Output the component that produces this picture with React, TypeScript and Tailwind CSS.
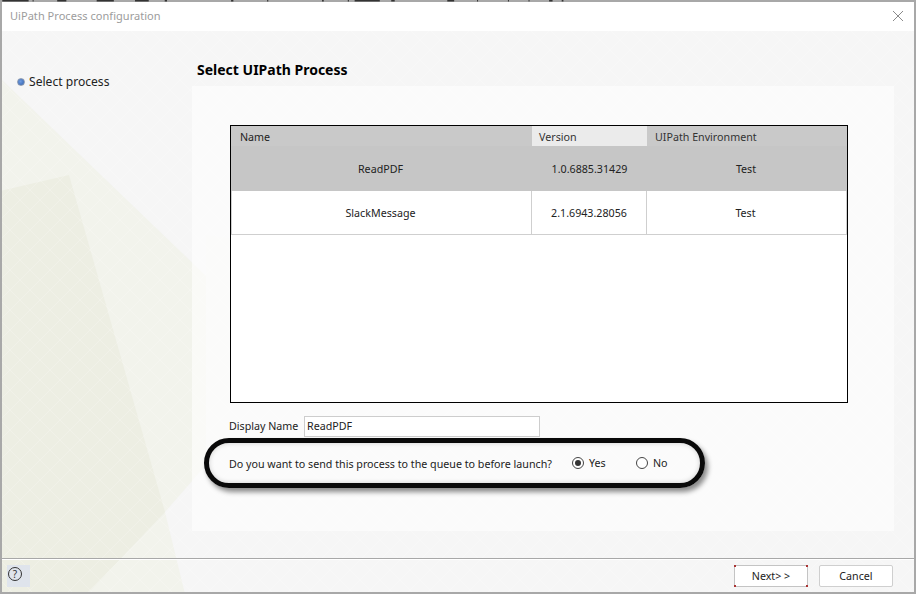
export default function App() {
  const font = "[font-family:'Noto_Sans',sans-serif]";
  const fragments = [[4, 46], [57, 1], [100, 16], [169, 30], [236, 24], [288, 4], [404, 4], [467, 2], [563, 3], [608, 2], [620, 44], [684, 6], [782, 12], [834, 1], [888, 1], [924, 1], [960, 6], [982, 3]];
  return (
    <div className={`relative isolate w-[916px] h-[594px] overflow-hidden bg-[#f6f6f6] flex flex-col ${font} text-[#1a1a1a]`}>
      <svg className="absolute inset-0 -z-10" width="916" height="594" aria-hidden="true">
        <defs>
          <pattern id="hatch" width="20" height="20" patternUnits="userSpaceOnUse">
            <path d="M0 0L20 20M20 0L0 20" stroke="#ffffff" strokeOpacity="0.25" strokeWidth="0.8" />
          </pattern>
        </defs>
        <polygon points="0,78 206,276 206,465 165,512 185,594 0,594" fill="#f2f3ec" />
        <polygon points="0,191 69,175 165,512 87,594 0,594" fill="#edeee3" />
        <polygon points="206,235 230,238 230,440 206,465" fill="#f6f6f2" />
        <rect width="916" height="594" fill="url(#hatch)" />
      </svg>

      <div className="h-[2px] shrink-0 bg-[#a8a8a8]">
        <svg width="916" height="2" className="block" aria-hidden="true">
          {fragments.map(([x, w]) => (
            <rect key={x} x={x * 0.572} y="0" width={Math.max(w * 0.572, 1)} height="1.5" fill="#333" />
          ))}
        </svg>
      </div>

      <div className="flex-1 flex flex-col border-x-2 border-[#a8a8a8] min-h-0">
        <div className="h-[29px] shrink-0 bg-white flex items-center justify-between pl-[8px] pr-[10px]">
          <span className="text-[11px] text-[#9c9c9c] tracking-[0.04px]">UiPath Process configuration</span>
          <svg width="12" height="12" viewBox="0 0 12 12" className="-mt-[2px]" aria-hidden="true">
            <path d="M1 1L11 11M11 1L1 11" stroke="#8a8a8a" strokeWidth="1" fill="none" />
          </svg>
        </div>

        <div className="h-[527px] shrink-0 flex">
          <div className="w-[190px] shrink-0 pl-[15px] pt-[42px]">
            <div className="flex items-center gap-[4px] h-[18px] text-[12.1px] text-[#222]">
              <span className="-mt-[1px] w-[8px] h-[8px] rounded-full border border-[#8f9cb3] bg-[radial-gradient(circle_at_40%_40%,#6f9be0,#2e5fae)]" />
              <span>Select process</span>
            </div>
          </div>
          <div className="w-[702px] shrink-0">
            <div className="h-[55px] pl-[5px] pt-[27px] text-[14px] leading-[24px] font-bold text-black">Select UIPath Process</div>
            <div className="h-[445px] bg-white/60 pt-[39px] flex flex-col">
              <div className="ml-[38px] w-[618px] h-[278px] border border-black shrink-0 bg-white text-[10.7px]">
                <div className="grid grid-cols-[301px_115px_200px] h-[20px] bg-[#c9c9c9]">
                  <div className="pl-[9px] pt-[2px] flex items-center text-[#222]">Name</div>
                  <div className="pl-[7px] pt-[2px] flex items-center bg-[#ebebeb] text-[#333]">Version</div>
                  <div className="pl-[8px] pt-[2px] flex items-center text-[#333]">UIPath Environment</div>
                </div>
                <div className="grid grid-cols-[301px_115px_200px] h-[45px] bg-[#c6c6c6] text-[#222]">
                  <div className="pt-[2px] pr-[2px] flex items-center justify-center">ReadPDF</div>
                  <div className="pt-[2px] flex items-center justify-center">1.0.6885.31429</div>
                  <div className="pt-[2px] pr-[2px] flex items-center justify-center">Test</div>
                </div>
                <div className="grid grid-cols-[301px_115px_200px] h-[44px] text-[#222] border-b border-[#cfcfcf]">
                  <div className="pt-[2px] pr-[2px] flex items-center justify-center border-x border-[#cfcfcf]">SlackMessage</div>
                  <div className="pt-[2px] flex items-center justify-center border-r border-[#cfcfcf]">2.1.6943.28056</div>
                  <div className="pt-[2px] pr-[2px] flex items-center justify-center border-r border-[#cfcfcf]">Test</div>
                </div>
              </div>

              <div className="mt-[13px] ml-[37px] h-[21px] flex items-center shrink-0 text-[10.7px] text-[#222]">
                <span className="w-[75px]">Display Name</span>
                <div className="w-[236px] h-[21px] bg-white border border-[#cdcdcd] pl-[2px] flex items-center">ReadPDF</div>
              </div>

              <div className="mt-[1px] ml-[12px] w-[501px] h-[50px] shrink-0 rounded-full border-[5px] border-[#0a0a0a] shadow-[3px_4px_5px_rgba(0,0,0,0.45),inset_0_0_5px_rgba(0,0,0,0.18)] pl-[20px] flex items-center text-[10.7px] text-[#222]">
                <span className="w-[343px] pt-[3px] whitespace-nowrap">Do you want to send this process to the queue to before launch?</span>
                <div className="flex items-center gap-[5px] w-[64px]">
                  <span className="w-[12px] h-[12px] rounded-full border border-[#444] flex items-center justify-center bg-white">
                    <span className="w-[6px] h-[6px] rounded-full bg-[#333]" />
                  </span>
                  <span>Yes</span>
                </div>
                <div className="flex items-center gap-[5px]">
                  <span className="w-[12px] h-[12px] rounded-full border border-[#444] bg-white" />
                  <span>No</span>
                </div>
              </div>
            </div>
          </div>
        </div>

        <div className="flex-1 min-h-0 border-t border-[#a8a8a8] shadow-[inset_0_1px_0_#ffffff] border-b-2 border-b-[#a8a8a8] flex items-start pl-[5px] pr-[21px] pt-[6px] justify-between">
          <div className="w-[23px] h-[22px] bg-[#dfe4ec] pl-[1px] pt-[2px]">
            <span className="w-[14px] h-[14px] rounded-full border border-[#333] flex items-center justify-center text-[10px] leading-none text-[#333]">?</span>
          </div>
          <div className="flex gap-[11px] text-[10.7px] text-[#222]">
            <button className="relative w-[74px] h-[22px] bg-white border border-[#c4c4c4] rounded-[1px]">
              Next&gt; &gt;
              <span className="absolute -left-px -top-px w-[2px] h-[2px] bg-[#a33]" />
              <span className="absolute -right-px -top-px w-[2px] h-[2px] bg-[#a33]" />
              <span className="absolute -left-px -bottom-px w-[2px] h-[2px] bg-[#a33]" />
              <span className="absolute -right-px -bottom-px w-[2px] h-[2px] bg-[#a33]" />
            </button>
            <button className="w-[74px] h-[22px] bg-white border border-[#cfcfcf] rounded-[2px]">Cancel</button>
          </div>
        </div>
      </div>
    </div>
  );
}
